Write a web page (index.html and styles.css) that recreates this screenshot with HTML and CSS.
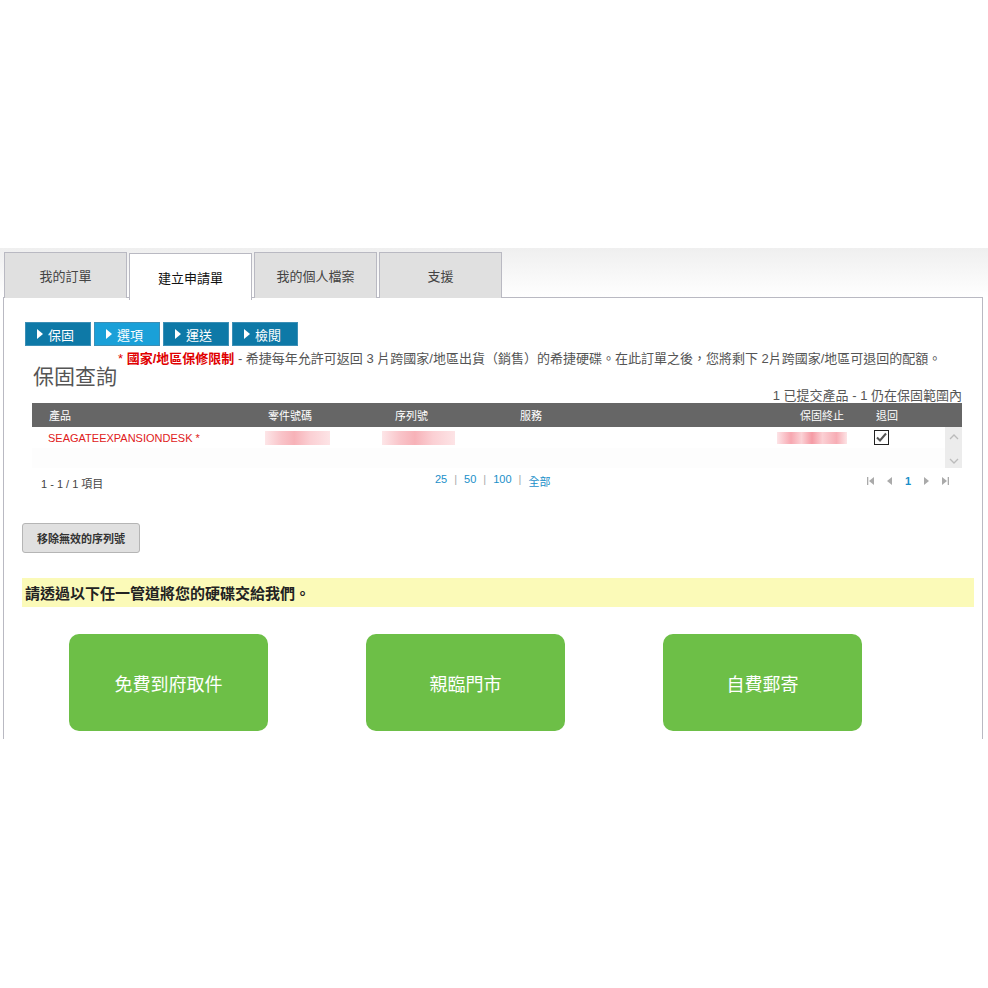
FILE: index.html
```html
<!DOCTYPE html>
<html lang="zh-Hant">
<head>
  <meta charset="UTF-8">
  <meta name="viewport" content="width=device-width, initial-scale=1.0">
  <title>建立申請單</title>
  <link rel="stylesheet" href="styles.css">
</head>
<body>
  <div class="top-space"></div>
  <div class="portal">
    <div class="tabs">
      <div class="tab">我的訂單</div>
      <div class="tab active">建立申請單</div>
      <div class="tab">我的個人檔案</div>
      <div class="tab">支援</div>
    </div>

    <div class="panel">
      <div class="steps">
        <div class="step"><span class="arrow"></span>保固</div>
        <div class="step current"><span class="arrow"></span>選項</div>
        <div class="step"><span class="arrow"></span>運送</div>
        <div class="step"><span class="arrow"></span>檢閱</div>
      </div>

      <div class="title-row">
        <h2 class="title">保固查詢</h2>
        <div class="note"><span class="note-red">* <b>國家/地區保修限制</b></span> - 希捷每年允許可返回 3 片跨國家/地區出貨（銷售）的希捷硬碟。在此訂單之後，您將剩下 2片跨國家/地區可退回的配額。</div>
      </div>

      <div class="count">1 已提交產品 - 1 仍在保固範圍內</div>

      <div class="grid">
        <div class="grid-head">
          <div class="cell c1">產品</div>
          <div class="cell c2">零件號碼</div>
          <div class="cell c3">序列號</div>
          <div class="cell c4">服務</div>
          <div class="cell c5">保固終止</div>
          <div class="cell c6">退回</div>
        </div>
        <div class="grid-body">
          <div class="grid-row">
            <div class="cell c1 product">SEAGATEEXPANSIONDESK *</div>
            <div class="cell c2"><span class="blur blur-part"></span></div>
            <div class="cell c3"><span class="blur blur-serial"></span></div>
            <div class="cell c4"></div>
            <div class="cell c5"><span class="blur blur-date"></span></div>
            <div class="cell c6"><span class="checkbox">
              <svg width="13" height="13" viewBox="0 0 13 13"><path d="M2 6.5 L5 9.5 L11 2.5" fill="none" stroke="#555" stroke-width="2"/></svg>
            </span></div>
          </div>
          <div class="scroll">
            <svg width="10" height="7" viewBox="0 0 10 7"><path d="M1 6 L5 2 L9 6" fill="none" stroke="#bbb" stroke-width="1.3"/></svg>
            <svg width="10" height="7" viewBox="0 0 10 7"><path d="M1 1 L5 5 L9 1" fill="none" stroke="#bbb" stroke-width="1.3"/></svg>
          </div>
        </div>
        <div class="grid-foot">
          <div class="items">1 - 1 / 1 項目</div>
          <div class="sizes">
            <a>25</a><span class="sep">|</span><a>50</a><span class="sep">|</span><a>100</a><span class="sep">|</span><a>全部</a>
          </div>
          <div class="pager">
            <svg width="8" height="8" viewBox="0 0 8 8"><rect x="0" y="0" width="1.3" height="8" fill="#aaa"/><path d="M7 0 L2 4 L7 8 Z" fill="#aaa"/></svg>
            <svg width="6" height="8" viewBox="0 0 6 8"><path d="M5 0 L0 4 L5 8 Z" fill="#aaa"/></svg>
            <span class="page">1</span>
            <svg width="6" height="8" viewBox="0 0 6 8"><path d="M1 0 L6 4 L1 8 Z" fill="#aaa"/></svg>
            <svg width="8" height="8" viewBox="0 0 8 8"><path d="M1 0 L6 4 L1 8 Z" fill="#aaa"/><rect x="6.7" y="0" width="1.3" height="8" fill="#aaa"/></svg>
          </div>
        </div>
      </div>

      <button class="remove-btn">移除無效的序列號</button>

      <div class="notice">請透過以下任一管道將您的硬碟交給我們。</div>

      <div class="channels">
        <div class="channel">免費到府取件</div>
        <div class="channel">親臨門市</div>
        <div class="channel">自費郵寄</div>
      </div>
    </div>
  </div>
</body>
</html>
```

FILE: styles.css
```css
body {
  margin: 0;
  font-family: "Liberation Sans", "Noto Sans CJK TC", sans-serif;
  color: #333;
  background: #fff;
}

.top-space {
  height: 248px;
}

.portal {
  background: linear-gradient(#efefef, #ffffff 50px) no-repeat;
  background-size: 100% 50px;
  height: 492px;
}

.tabs {
  display: flex;
  gap: 2px;
  padding: 4px 0 0 4px;
  height: 50px;
  box-sizing: border-box;
  position: relative;
  z-index: 1;
}

.tab {
  width: 123px;
  height: 46px;
  box-sizing: border-box;
  background: #e0e0e0;
  border: 1px solid #b9b9c2;
  border-bottom: none;
  display: flex;
  align-items: center;
  justify-content: center;
  font-size: 13px;
  color: #444;
}

.tab.active {
  background: #fff;
  height: 47px;
  margin-top: 1px;
  color: #111;
}

.panel {
  margin-left: 3px;
  width: 980px;
  box-sizing: border-box;
  height: 442px;
  border: 1px solid #b9b9c2;
  border-bottom: none;
  margin-top: -1px;
  padding: 24px 0 0 21px;
  background: #fff;
}

.steps {
  display: flex;
  gap: 3px;
}

.step {
  width: 66px;
  height: 24px;
  background: #0e79a7;
  border: 1px solid #3c8fb6;
  box-sizing: border-box;
  color: #fff;
  font-size: 13px;
  display: flex;
  align-items: center;
  padding-left: 11px;
}

.step.current {
  background: #1aa0d8;
}

.arrow {
  width: 0;
  height: 0;
  border-left: 6px solid #fff;
  border-top: 5px solid transparent;
  border-bottom: 5px solid transparent;
  margin-right: 5px;
}

.title-row {
  display: flex;
  align-items: flex-start;
  margin-left: 8px;
  margin-top: 2px;
}

.title {
  margin: 12px 0 0;
  font-family: "Liberation Serif", "Noto Sans CJK TC", serif;
  font-size: 21px;
  font-weight: normal;
  color: #555;
  white-space: nowrap;
}

.note {
  font-size: 13px;
  color: #555;
  white-space: nowrap;
  margin-left: 1px;
}

.note-red {
  color: #e00000;
}

.count {
  text-align: right;
  font-size: 13px;
  color: #555;
  width: 937px;
  margin-top: -2px;
  line-height: 15px;
}

.grid {
  margin-left: 7px;
  width: 930px;
}

.grid-head {
  display: grid;
  grid-template-columns: 236px 127px 125px 280px 76px 1fr;
  background: #666;
  color: #fff;
  font-size: 11px;
  height: 24px;
  align-items: center;
}

.grid-head .c1 {
  padding-left: 17px;
}

.grid-body {
  display: flex;
  height: 41px;
  background: #fdfdfd;
}

.grid-row {
  flex: 1;
  display: grid;
  grid-template-columns: 236px 127px 125px 280px 76px 1fr;
  height: 21px;
  align-items: center;
  background: #fff;
}

.product {
  color: #e02020;
  font-size: 11px;
  padding-left: 16px;
}

.blur {
  display: block;
  height: 14px;
  background: linear-gradient(90deg, #fde6e8, #f9c4c9 25%, #f7b2b8 45%, #fbd0d4 70%, #fde4e6);
}

.blur-part {
  width: 65px;
  margin-left: -3px;
}

.blur-serial {
  width: 73px;
  margin-left: -13px;
}

.blur-date {
  width: 70px;
  margin-left: -23px;
  height: 12px;
  background: linear-gradient(90deg, #fde4e7, #f7a7b0 20%, #fbd2d6 35%, #f59aa4 50%, #fbd0d4 65%, #f7adb5 85%, #fde4e6);
}

.checkbox {
  display: flex;
  width: 15px;
  height: 15px;
  box-sizing: border-box;
  border: 1px solid #222;
  align-items: center;
  justify-content: center;
  margin-left: -2px;
  background: #fff;
}

.scroll {
  width: 17px;
  background: #ececec;
  display: flex;
  flex-direction: column;
  justify-content: space-between;
  align-items: center;
  padding: 6px 0 3px;
  box-sizing: border-box;
}

.grid-foot {
  display: flex;
  align-items: center;
  height: 26px;
  font-size: 11px;
  position: relative;
}

.items {
  color: #444;
  padding-left: 9px;
  width: 394px;
  margin-top: 4px;
}

.sizes {
  color: #1a8fc9;
  display: flex;
  gap: 7px;
}

.sizes .sep {
  color: #aaa;
}

.pager {
  margin-left: auto;
  margin-right: 13px;
  display: flex;
  align-items: center;
  gap: 12px;
}

.page {
  color: #1a8fc9;
  font-weight: bold;
  font-size: 11px;
}

.remove-btn {
  display: block;
  margin: 29px 0 0 -3px;
  width: 118px;
  height: 30px;
  background: #e0e0e0;
  border: 1px solid #b5b5b5;
  border-radius: 3px;
  font-family: "Liberation Sans", "Noto Sans CJK TC", sans-serif;
  font-size: 11px;
  font-weight: bold;
  color: #333;
}

.notice {
  margin: 25px 0 0 -3px;
  width: 952px;
  height: 29px;
  box-sizing: border-box;
  background: #fbfab8;
  font-size: 15px;
  font-weight: bold;
  color: #222;
  padding-left: 3px;
  display: flex;
  align-items: center;
}

.channels {
  display: flex;
  gap: 98px;
  margin: 27px 0 0 44px;
}

.channel {
  width: 199px;
  height: 97px;
  background: #6dbf47;
  border-radius: 10px;
  color: #fff;
  font-size: 18px;
  display: flex;
  align-items: center;
  justify-content: center;
}
```
